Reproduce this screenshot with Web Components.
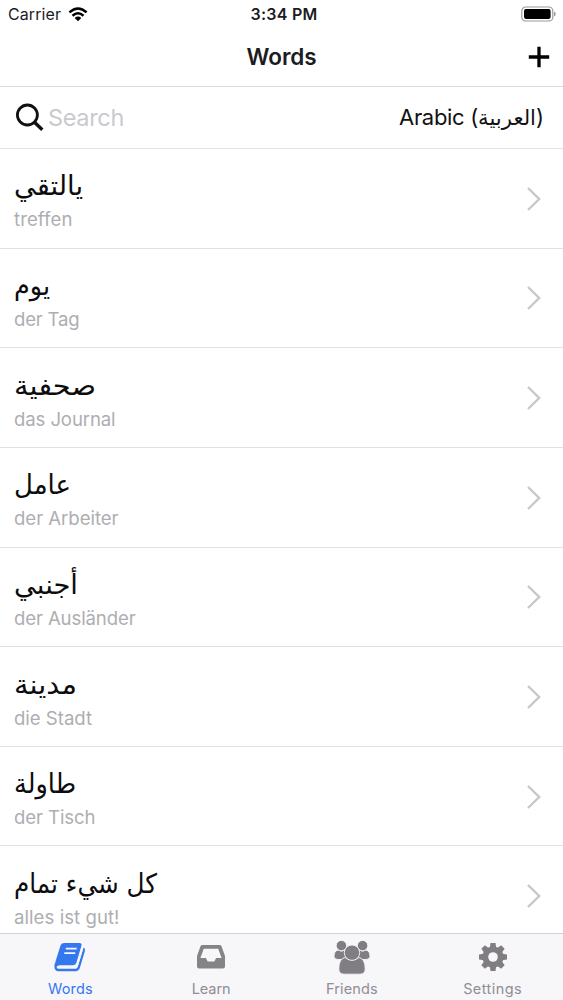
<!DOCTYPE html>
<html lang="en">
<head>
<meta charset="utf-8">
<title>Words</title>
<style>
html,body{margin:0;height:100%;background:#fff}
body{font-family:Inter,"DejaVu Sans",sans-serif;color:#1c1c1f;overflow:hidden}
</style>
</head>
<body>
<words-app></words-app>
<script>
const define=(name,html,setup)=>customElements.define(name,class extends HTMLElement{
  connectedCallback(){
    if(this.shadowRoot)return;
    this.attachShadow({mode:'open'}).innerHTML=html;
    if(setup)setup(this,this.shadowRoot);
  }
});

/* A single line of text set to a given width: Latin by tracking, Arabic by horizontal scale. */
define('fit-text',`<style>:host{display:block;white-space:nowrap}span{display:inline-block;transform-origin:0 50%}</style><span></span>`,(el,root)=>{
  const s=root.querySelector('span'),t=el.getAttribute('text'),w=+el.getAttribute('width');
  s.textContent=t;
  el.style.width=w+'px';
  const n=s.getBoundingClientRect().width;
  if(/[\u0600-\u06ff]/.test(t))s.style.transform=`scaleX(${w/n})`;
  else s.style.letterSpacing=(w-n)/t.length+'px';
});

define('status-bar',`<style>
:host{display:grid;grid-template-columns:1fr auto 1fr;align-items:center;height:28px;padding:0 7px 0 8px;font-size:16px}
.left{display:flex;align-items:center;gap:7px}
.time{font-weight:600;font-size:16px;margin-left:4px}
.right{justify-self:end;display:block}
svg{display:block}
</style>
<div class="left"><fit-text text="Carrier" width="53"></fit-text>
<svg width="20" height="15" viewBox="0 0 20 15" fill="none" stroke="#000" stroke-width="2.5"><path d="M1.4 5.4Q10-2.4 18.6 5.4M4.5 8.7Q10 3.9 15.5 8.7"/><path d="M6.7 10.9Q10 8 13.3 10.9L10 14.2z" fill="#000" stroke="none"/></svg></div>
<fit-text class="time" text="3:34 PM" width="67"></fit-text>
<svg class="right" width="35" height="16" viewBox="0 0 35 16"><rect x=".8" y="1" width="31" height="14" rx="3.8" fill="#fff" stroke="#999" stroke-width="1.2"/><rect x="3" y="3.1" width="26.6" height="9.8" rx="1.8" fill="#000"/><path d="M33 5.5q1.7.8 1.7 2.5T33 10.5z" fill="#999"/></svg>`);

define('nav-bar',`<style>
:host{display:grid;grid-template-columns:1fr auto 1fr;align-items:center;height:58px;padding:0 13px 0 13px;border-bottom:1px solid #d9d9dc;box-sizing:content-box}
fit-text{grid-column:2;font-size:22.5px;font-weight:600;margin-bottom:2px}
svg{justify-self:end}
</style><fit-text text="Words" width="70"></fit-text>
<svg width="22" height="22" viewBox="0 0 22 22" stroke="#000" stroke-width="3.3"><path d="M.8 11H21.2M11 .8V21.2"/></svg>`);

define('search-bar',`<style>
:host{display:flex;align-items:center;height:61px;padding:0 19px 0 15px;border-bottom:1px solid #e2e2e4}
.hint{font-size:23.5px;color:#c9c9ce;flex:1;margin-left:4px}
.lang{display:flex;align-items:center;font-size:22px;color:#111;margin-top:-1px}
.ar{font-size:21px}
</style>
<svg width="29" height="29" viewBox="0 0 29 29" fill="none" stroke="#111" stroke-width="2.8"><circle cx="12.4" cy="12" r="10"/><path d="M19.5 19.2L27.3 26.8" stroke-width="3.4"/></svg>
<div class="hint"><fit-text text="Search" width="76"></fit-text></div>
<div class="lang"><fit-text text="Arabic (" width="79"></fit-text><fit-text class="ar" text="العربية" width="58"></fit-text><fit-text text=")" width="8"></fit-text></div>`);

define('word-row',`<style>
:host{display:flex;align-items:center;justify-content:space-between;box-sizing:border-box;height:99.65px;padding:0 21px 0 14px;border-bottom:1px solid #e0e0e2}
.text{padding-top:4px}
.word{height:38px;line-height:36px;font-size:27px;font-family:"DejaVu Sans",sans-serif;color:#0c0c0e}
.meaning{height:26px;line-height:26px;font-size:18.6px;color:#aeaeb2}
svg{margin-top:1px}
</style><div class="text"></div>
<svg width="16" height="28" viewBox="0 0 16 28" fill="none" stroke="#c7c7cc" stroke-width="2.4"><path d="M2 3L13.2 14L2 25"/></svg>`,(el,root)=>{
  for(const k of ['word','meaning']){
    const f=document.createElement('fit-text');
    f.className=k;
    f.setAttribute('text',el.getAttribute(k));
    f.setAttribute('width',el.getAttribute(k+'-width'));
    root.querySelector('.text').append(f);
  }
});

define('tab-item',`<style>
:host{display:flex;flex-direction:column;align-items:center;color:#8f8e93}
:host([active]){color:#3478f0}
.icon{height:36px;margin-top:6px}
.label{font-size:14.5px;line-height:20px;margin-top:3px}
</style><div class="icon"><slot></slot></div><div class="label"></div>`,(el,root)=>{
  const f=document.createElement('fit-text');
  f.setAttribute('text',el.getAttribute('label'));
  f.setAttribute('width',el.getAttribute('width'));
  root.querySelector('.label').append(f);
});

define('tab-bar',`<style>
:host{display:grid;grid-template-columns:repeat(4,1fr);height:66px;border-top:1px solid #d2d1d5;background:#f7f6f9}
svg{display:block}
</style>
<tab-item active label="Words" width="45"><svg width="36" height="36" viewBox="0 0 36 36"><path d="M12.3 3H27.4Q30.2 3 29.4 5.8L24.5 22.6Q23.7 25.2 21 25.2H8Q5.6 25.2 4.6 26.8Q2.6 24.5 3.5 21.5L8.6 5.3Q9.4 3 12.3 3Z" fill="currentColor"/><path d="M4 23Q2.3 30 6.6 30H23.6Q26 30 26.8 27.4L31.8 10.6Q32.2 9 31.2 8.4" fill="none" stroke="currentColor" stroke-width="2.3"/><path d="M6.4 27H22.6Q24.9 27 25.6 24.6L30.6 8" fill="none" stroke="#f7f6f9" stroke-width="1.5"/><path d="M13.8 8.6H24.7M12.3 13.1H23.2" stroke="#f7f6f9" stroke-width="1.9"/></svg></tab-item>
<tab-item label="Learn" width="39"><svg width="36" height="36" viewBox="0 0 36 36"><path fill="#858387" fill-rule="evenodd" d="M9.3 5H26.7Q28 5 28.5 6.2L32 16V26.5Q32 28.6 30 28.6H6Q4 28.6 4 26.5V16L7.5 6.2Q8 5 9.3 5ZM10.8 8.7L7.4 18H12.9L14.7 21.6H21.3L23.1 18H28.6L25.2 8.7Z"/></svg></tab-item>
<tab-item label="Friends" width="52"><svg width="36" height="36" viewBox="0 0 36 36"><g fill="#807e82" stroke="#f7f6f9" stroke-width=".9"><path d="M4 10Q7.4 12.3 11 10Q14 12 14 19.5H4Q0 19.5 0 16.5Q0 11 4 10ZM32 10Q28.6 12.3 25 10Q22 12 22 19.5H32Q36 19.5 36 16.5Q36 11 32 10Z"/><circle cx="7.4" cy="5.6" r="5.2"/><circle cx="28.6" cy="5.6" r="5.2"/><path d="M10.8 17.5Q18 22.5 25.2 17.5Q31.2 19 31.2 29Q31.2 34.2 26 34.2H10Q4.8 34.2 4.8 29Q4.8 19 10.8 17.5Z"/><circle cx="18" cy="12.7" r="7.7"/></g></svg></tab-item>
<tab-item label="Settings" width="59"><svg width="36" height="36" viewBox="-18 -17 36 36"><g fill="#807e82"><path id="t" d="M-3.2-9L-2.5-14H2.5L3.2-9V9L2.5 14H-2.5L-3.2 9Z"/><use href="#t" transform="rotate(45)"/><use href="#t" transform="rotate(90)"/><use href="#t" transform="rotate(135)"/><circle r="10.6"/></g><circle r="4.8" fill="#f7f6f9"/></svg></tab-item>`);

define('words-app',`<style>
:host{display:flex;flex-direction:column;height:1000px;width:563px;background:#fff}
main{flex:1;min-height:0;overflow:hidden}
</style>
<status-bar></status-bar><nav-bar></nav-bar><search-bar></search-bar>
<main>
<word-row word="يالتقي" word-width="69" meaning="treffen" meaning-width="58.5"></word-row>
<word-row word="يوم" word-width="36" meaning="der Tag" meaning-width="65.5"></word-row>
<word-row word="صحفية" word-width="82" meaning="das Journal" meaning-width="101.5"></word-row>
<word-row word="عامل" word-width="57" meaning="der Arbeiter" meaning-width="104.5"></word-row>
<word-row word="أجنبي" word-width="64" meaning="der Ausländer" meaning-width="121.5"></word-row>
<word-row word="مدينة" word-width="63" meaning="die Stadt" meaning-width="78"></word-row>
<word-row word="طاولة" word-width="62" meaning="der Tisch" meaning-width="81.5"></word-row>
<word-row word="كل شيء تمام" word-width="143" meaning="alles ist gut!" meaning-width="105.5"></word-row>
</main>
<tab-bar></tab-bar>`);
</script>
</body>
</html>
